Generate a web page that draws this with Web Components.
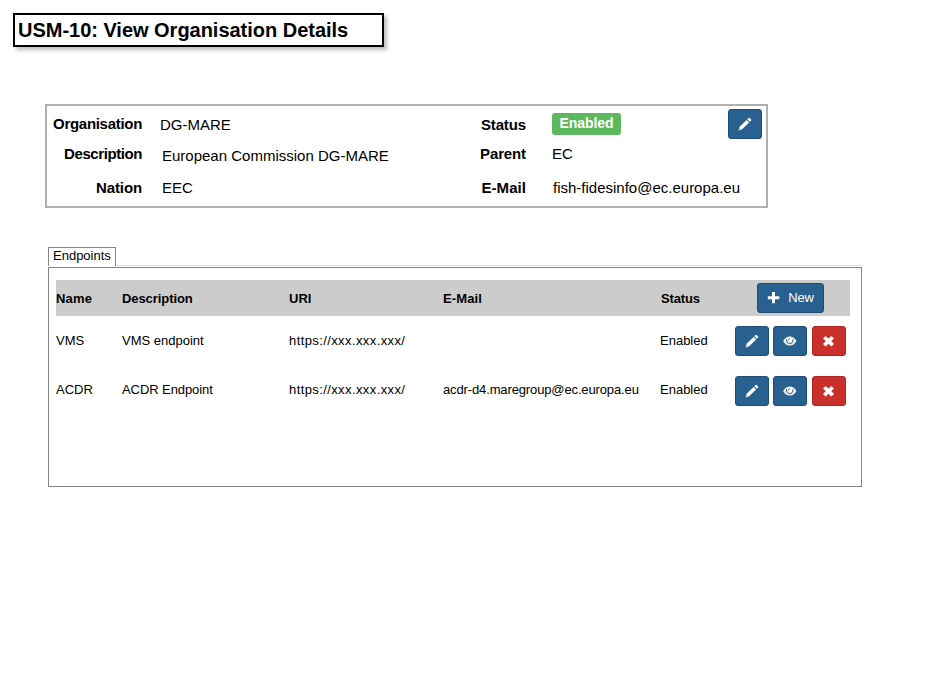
<!DOCTYPE html>
<html lang="en"><head><meta charset="utf-8"><title>View Organisation Details</title>
<style>
html,body{margin:0;background:#fff}
body{font-family:"Liberation Sans",Arial,sans-serif;color:#000;width:945px;height:692px;overflow:hidden}
</style></head><body>
<organisation-page></organisation-page>
<script>
const define=(name,html)=>customElements.define(name,class extends HTMLElement{
  constructor(){super();this.attachShadow({mode:'open'}).innerHTML=html;}
});

/* Square or labelled button with a glyph */
const GLYPHS={
  pencil:'<path d="M.6 13.400l.8-3.300L8.600 2.900l2.500 2.500L3.900 12.600z"/><path d="M9.300 2.200l1.300-1.300q.5-.5 1 0l1.500 1.500q.5.5 0 1l-1.300 1.300z"/><path d="M1.500 11.300l1.200 1.200" stroke="#286090" stroke-width=".7"/>',
  eye:'<path d="M.2 7C3.200.9 10.400.9 13.400 7 10.400 13 3.200 13 .2 7z"/><path d="M3.600 5.100C2.900 10.900 10.700 10.900 10 5.100" fill="none" stroke="#286090" stroke-width="1"/><path d="M1.900 7.200Q6.800 13.300 11.700 7.200" fill="none" stroke="#286090" stroke-width=".35"/><path d="M5.300 6.600Q5.300 5 7 4.700" fill="none" stroke="#286090" stroke-width=".8"/>',
  cross:'<path d="M3.600 1.900L6.500 4.600 9.400 1.900l2.600 2.500L9.200 7.100 12 9.900l-2.600 2.500-2.900-2.700-2.900 2.700L1 9.900l2.800-2.800L1 4.400z"/>',
  plus:'<path d="M5 1h3v4.300h4.300v3H8v4H5v-4H.8v-3H5z"/>'
};
customElements.define('icon-button',class extends HTMLElement{
  constructor(){super();this.attachShadow({mode:'open'});}
  connectedCallback(){this.shadowRoot.innerHTML=`<style>
    :host{display:block;width:34px;height:30px}
    :host([wide]){width:67px}
    button{all:unset;box-sizing:border-box;display:flex;align-items:center;justify-content:center;width:100%;height:100%;border:1px solid #204d74;border-radius:3px;background:#286090;color:#fff;font:13px/18px "Liberation Sans",Arial,sans-serif}
    :host([danger]) button{background:#c9302c;border-color:#ac2925}
    :host([wide]) button{gap:7px;letter-spacing:-.25px}
    svg{width:14px;height:14px;fill:#fff;display:block}
  </style><button><svg viewBox="0 0 14 14">${GLYPHS[this.getAttribute('icon')]}</svg><slot></slot></button>`;}
});

define('page-title',`<style>
  :host{display:block;box-sizing:border-box;width:371px;height:34px;border:2px solid #000;background:#fff;box-shadow:3px 3px 4px #0004;padding-left:3px;font:bold 20px/30px "Liberation Sans",Arial,sans-serif;letter-spacing:-.02px;white-space:nowrap}
</style><slot></slot>`);

define('status-badge',`<style>
  :host{display:block;box-sizing:border-box;width:69px;height:22px;border-radius:3px;background:#5cb85c;color:#fff;text-align:center;font:bold 14px/21px "Liberation Sans",Arial,sans-serif;letter-spacing:-.1px}
</style><slot></slot>`);

define('organisation-card',`<style>
  :host{display:grid;box-sizing:border-box;width:723px;height:104px;border:2px solid #b0b0b0;padding-top:8px;
    grid-template-columns:95px 301px 83px 175px 1fr;grid-template-rows:30px 34px 20px;align-items:start;font-size:15px;line-height:20px;white-space:nowrap}
  b{text-align:right;letter-spacing:-.3px}
  .tight{letter-spacing:-.42px}
  .loose{letter-spacing:-.12px}
  .v{padding-left:20px}.r{padding-left:26px}
  .down{margin-top:1px}
  status-badge{margin:-1px 0 0 26px}
  icon-button{margin:-5px 0 0 27px}
</style>
<b>Organisation</b><span class="v down" style="padding-left:18px">DG-MARE</span><b class="down loose">Status</b><status-badge>Enabled</status-badge><icon-button icon="pencil"></icon-button>
<b class="tight">Description</b><span class="v" style="margin-top:2px">European Commission DG-MARE</span><b class="loose">Parent</b><span class="r">EC</span><i></i>
<b class="loose">Nation</b><span class="v">EEC</span><b style="letter-spacing:.05px">E-Mail</b><span class="r" style="padding-left:27px">fish-fidesinfo@ec.europa.eu</span>`);

define('endpoint-row',`<style>
  :host{display:grid;grid-template-columns:66px 167px 154px 217px 75px 1fr;align-items:center;width:794px;height:30px;font-size:13px;line-height:16px;white-space:nowrap}
  :host([header]){height:36px;background:#ccc;font-weight:bold}
  :host([header]) ::slotted(span){padding-top:2px}
  :host([header]) ::slotted([slot=status]){padding-left:1px;letter-spacing:-.15px}
  :host(:not([header])) ::slotted([slot=uri]){letter-spacing:.4px}
  ::slotted([slot=email]){letter-spacing:-.13px}
  :host([header]) ::slotted([slot=email]){letter-spacing:.1px}
  :host([header]) ::slotted([slot=name]){letter-spacing:.2px}
  :host([header]) ::slotted([slot=description]){letter-spacing:-.08px}
  .actions{display:flex;gap:4px}
  :host([header]) .actions{padding-left:22px}
</style><slot name="name"></slot><slot name="description"></slot><slot name="uri"></slot><slot name="email"></slot><slot name="status"></slot><div class="actions"><slot></slot></div>`);

define('tab-panel',`<style>
  :host{display:block;width:814px}
  .bar{display:flex;height:19px;align-items:stretch}
  .tab{box-sizing:border-box;width:68px;border:1px solid #84848c;border-bottom:0;padding-left:4px;font-size:13px;line-height:16px;white-space:nowrap}
  .line{flex:1;border-bottom:1px solid #e0e0e4;margin-right:-1px}
  .panel{box-sizing:border-box;margin-top:1px;height:220px;border:1px solid #84848c;padding:12px 7px;display:flex;flex-direction:column}
</style><div class="bar"><div class="tab"><slot name="tab"></slot></div><div class="line"></div></div><div class="panel"><slot></slot></div>`);

define('organisation-page',`<style>
  :host{display:flex;flex-direction:column;padding:13px 0 0 13px}
  organisation-card{margin:57px 0 0 32px}
  tab-panel{margin:39px 0 0 35px}
  .first{margin-top:10px}.second{margin-top:20px}
</style>
<page-title>USM-10: View Organisation Details</page-title>
<organisation-card></organisation-card>
<tab-panel><span slot="tab">Endpoints</span>
<endpoint-row header><span slot="name">Name</span><span slot="description">Description</span><span slot="uri">URI</span><span slot="email">E-Mail</span><span slot="status">Status</span><icon-button wide icon="plus">New</icon-button></endpoint-row>
<endpoint-row class="first"><span slot="name">VMS</span><span slot="description">VMS endpoint</span><span slot="uri">https://xxx.xxx.xxx/</span><span slot="email"></span><span slot="status">Enabled</span><icon-button icon="pencil"></icon-button><icon-button icon="eye"></icon-button><icon-button danger icon="cross" style="margin-left:1px"></icon-button></endpoint-row>
<endpoint-row class="second"><span slot="name" style="margin-top:-2px">ACDR</span><span slot="description" style="margin-top:-2px;letter-spacing:-.08px">ACDR Endpoint</span><span slot="uri" style="margin-top:-2px">https://xxx.xxx.xxx/</span><span slot="email" style="margin-top:-2px">acdr-d4.maregroup@ec.europa.eu</span><span slot="status" style="margin-top:-2px">Enabled</span><icon-button icon="pencil"></icon-button><icon-button icon="eye"></icon-button><icon-button danger icon="cross" style="margin-left:1px"></icon-button></endpoint-row>
</tab-panel>`);
</script></body></html>
